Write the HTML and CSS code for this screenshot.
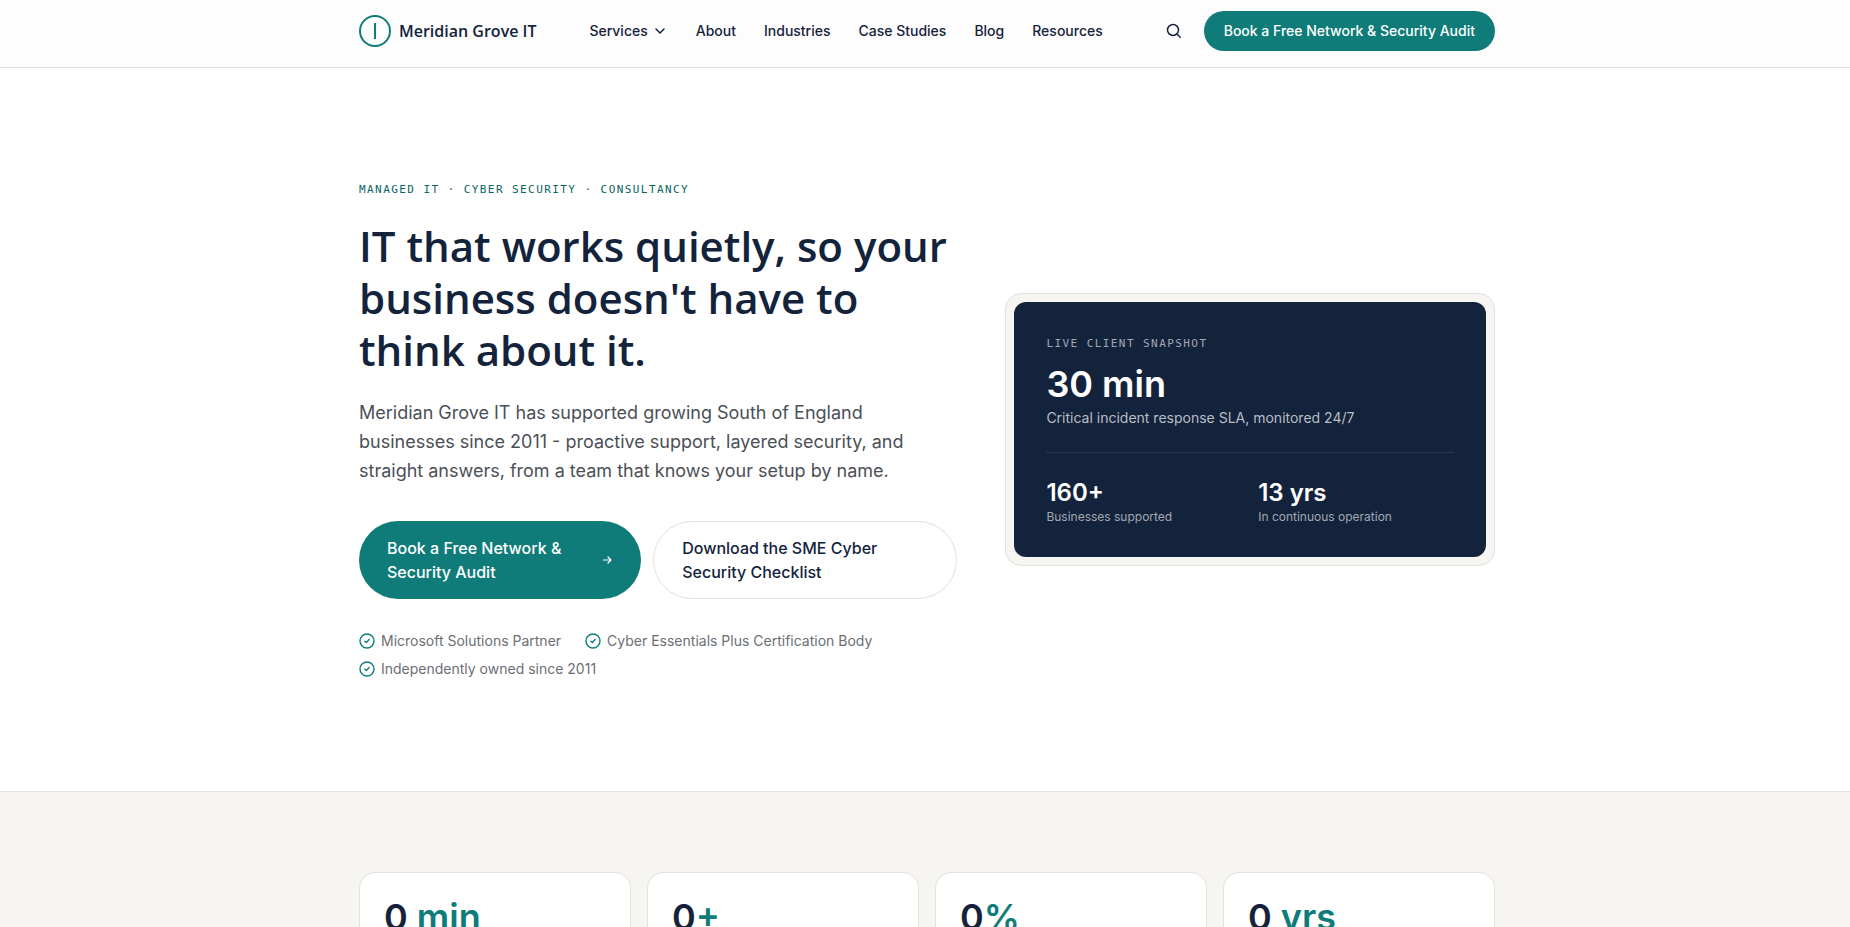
FILE: index.html
```html
<!DOCTYPE html>
<html lang="en-GB">
<head>
<meta charset="utf-8">
<meta name="viewport" content="width=device-width, initial-scale=1">
<title>Meridian Grove IT</title>
<link rel="stylesheet" href="styles.css">
</head>
<body>
<header class="site-header">
  <div class="container header-row">
    <a class="brand" href="#">
      <svg width="32" height="32" viewBox="0 0 32 32" fill="none" stroke="currentColor" stroke-width="2" aria-hidden="true"><circle cx="16" cy="16" r="15"/><path d="M16 8v16"/></svg>
      <span>Meridian Grove IT</span>
    </a>
    <nav class="main-nav" aria-label="Main">
      <button class="nav-link" type="button">Services
        <svg width="16" height="16" viewBox="0 0 16 16" fill="none" stroke="currentColor" stroke-width="1.5" stroke-linecap="round" stroke-linejoin="round" aria-hidden="true"><path d="M4 6l4 4 4-4"/></svg>
      </button>
      <a class="nav-link" href="#">About</a>
      <a class="nav-link" href="#">Industries</a>
      <a class="nav-link" href="#">Case Studies</a>
      <a class="nav-link" href="#">Blog</a>
      <a class="nav-link" href="#">Resources</a>
    </nav>
    <div class="header-actions">
      <button class="search-button" type="button" aria-label="Search">
        <svg width="18" height="18" viewBox="0 0 18 18" fill="none" stroke="currentColor" stroke-width="1.5" stroke-linecap="round" aria-hidden="true"><circle cx="8" cy="8" r="5.5"/><path d="M12.2 12.2l3 3"/></svg>
      </button>
      <a class="button button-small" href="#">Book a Free Network &amp; Security Audit</a>
    </div>
  </div>
</header>
<main>
  <section class="hero">
    <div class="container hero-grid">
      <div class="hero-copy">
        <p class="eyebrow">Managed IT · Cyber Security · Consultancy</p>
        <h1>IT that works quietly, so your business doesn't have to think about it.</h1>
        <p class="lead">Meridian Grove IT has supported growing South of England businesses since 2011 - proactive support, layered security, and straight answers, from a team that knows your setup by name.</p>
        <div class="hero-buttons">
          <a class="button button-large" href="#"><span>Book a Free Network &amp; Security Audit</span>
            <svg width="12" height="12" viewBox="0 0 12 12" fill="none" stroke="currentColor" stroke-width="1.2" stroke-linecap="round" stroke-linejoin="round" aria-hidden="true"><path d="M2.5 6h7.5M7 3l3 3-3 3"/></svg>
          </a>
          <a class="button button-large button-outline" href="#"><span>Download the SME Cyber Security Checklist</span></a>
        </div>
        <ul class="badges">
          <li><svg width="16" height="16" viewBox="0 0 16 16" fill="none" stroke="currentColor" stroke-width="1.4" stroke-linecap="round" stroke-linejoin="round" aria-hidden="true"><circle cx="8" cy="8" r="7"/><path d="M5.8 8.2l1.5 1.4 2.8-3"/></svg>Microsoft Solutions Partner</li>
          <li><svg width="16" height="16" viewBox="0 0 16 16" fill="none" stroke="currentColor" stroke-width="1.4" stroke-linecap="round" stroke-linejoin="round" aria-hidden="true"><circle cx="8" cy="8" r="7"/><path d="M5.8 8.2l1.5 1.4 2.8-3"/></svg>Cyber Essentials Plus Certification Body</li>
          <li><svg width="16" height="16" viewBox="0 0 16 16" fill="none" stroke="currentColor" stroke-width="1.4" stroke-linecap="round" stroke-linejoin="round" aria-hidden="true"><circle cx="8" cy="8" r="7"/><path d="M5.8 8.2l1.5 1.4 2.8-3"/></svg>Independently owned since 2011</li>
        </ul>
      </div>
      <aside class="snapshot-frame">
        <div class="snapshot">
          <p class="snapshot-label">Live client snapshot</p>
          <p class="snapshot-value">30 min</p>
          <p class="snapshot-note">Critical incident response SLA, monitored 24/7</p>
          <div class="snapshot-pair">
            <div><p class="pair-value">160+</p><p class="pair-note">Businesses supported</p></div>
            <div><p class="pair-value">13 yrs</p><p class="pair-note">In continuous operation</p></div>
          </div>
        </div>
      </aside>
    </div>
  </section>
  <section class="stats">
    <div class="container stats-grid">
      <div class="stat">0<span class="unit"> min</span></div>
      <div class="stat">0<span class="unit">+</span></div>
      <div class="stat">0<span class="unit">%</span></div>
      <div class="stat">0<span class="unit"> yrs</span></div>
    </div>
  </section>
</main>
</body>
</html>
```
FILE: styles.css
```css
:root {
  --navy: #14233c;
  --teal: #0f7c7a;
  --line: #e2e1dc;
  --sand: #f6f5f1;
}
* { box-sizing: border-box; }
body {
  margin: 0;
  background: #fff;
  color: var(--navy);
  font: 16px/24px Inter, "Liberation Sans", sans-serif;
}
p, h1, ul { margin: 0; padding: 0; }
a { color: inherit; text-decoration: none; }
svg { flex: none; display: block; }
button { font: inherit; color: inherit; background: none; border: 0; padding: 0; cursor: pointer; }

.container {
  max-width: 1204px;
  margin: 0 auto;
  padding: 0 32px 0 36px;
}

.site-header {
  padding: 11px 0 16px;
  background: #fdfdfd;
  border-bottom: 1px solid #dcdedf;
}
.header-row { display: flex; align-items: center; justify-content: space-between; }
.brand { display: flex; align-items: center; gap: 8px; color: var(--teal); }
.brand span { color: var(--navy); font: 600 16px/24px "Open Sans", "Noto Sans", sans-serif; }
.main-nav { display: flex; align-items: center; gap: 28px; }
.nav-link { display: flex; align-items: center; gap: 4px; font-size: 14px; line-height: 20px; font-weight: 500; }
.header-actions { display: flex; align-items: center; gap: 12px; }
.search-button { display: grid; place-items: center; width: 36px; height: 36px; }

.button {
  display: flex;
  align-items: center;
  border-radius: 40px;
  background: var(--teal);
  color: #fff;
  font-weight: 500;
}
.button-small { padding: 10px 20px; font-size: 14px; line-height: 20px; }
.button-large { padding: 15px 28px; gap: 8px; justify-content: space-between; }
.button-outline { padding: 14px 28px; background: #fff; border: 1px solid var(--line); color: var(--navy); }

.hero { padding: 112px 0; }
.hero-grid { display: grid; grid-template-columns: 11fr 9fr; gap: 48px; align-items: center; }
.eyebrow, .snapshot-label {
  font: 11px/20px "DejaVu Sans Mono", monospace;
  letter-spacing: 0.13em;
  text-transform: uppercase;
}
.eyebrow { color: #0b6462; }
h1 { margin-top: 20px; font: 600 42px/52px "Open Sans", "Noto Sans", sans-serif; }
.lead { margin-top: 22px; max-width: 560px; font-size: 18px; line-height: 29px; color: #4b5056; }
.hero-buttons { display: grid; grid-template-columns: 282fr 304fr; gap: 12px; margin-top: 36px; }
.badges { display: flex; flex-wrap: wrap; gap: 8px 24px; margin-top: 32px; list-style: none; }
.badges li { display: flex; align-items: center; gap: 6px; font-size: 14px; line-height: 20px; color: #6b6f75; }
.badges svg { color: var(--teal); }

.snapshot-frame { padding: 8px; border: 1px solid var(--line); border-radius: 16px; background: var(--sand); }
.snapshot { padding: 32px; border-radius: 12px; background: var(--navy); color: #fff; }
.snapshot-label { color: #a1a7b1; }
.snapshot-value { margin-top: 10px; font-size: 36px; line-height: 40px; font-weight: 600; }
.snapshot-note { margin-top: 4px; font-size: 14px; line-height: 20px; color: #b9bdc5; }
.snapshot-pair {
  display: grid;
  grid-template-columns: 1fr 1fr;
  gap: 16px;
  margin-top: 24px;
  padding-top: 24px;
  border-top: 1px solid #2b3950;
}
.pair-value { font-size: 24px; line-height: 32px; font-weight: 600; }
.pair-note { font-size: 12px; line-height: 16px; color: #a1a7b1; }

.stats { padding: 80px 0; background: var(--sand); border-top: 1px solid var(--line); }
.stats-grid { display: grid; grid-template-columns: repeat(4, 1fr); gap: 16px; }
.stat {
  padding: 24px;
  border: 1px solid var(--line);
  border-radius: 16px;
  background: #fff;
  font-size: 36px;
  line-height: 40px;
  font-weight: 600;
}
.unit { color: var(--teal); }
```
